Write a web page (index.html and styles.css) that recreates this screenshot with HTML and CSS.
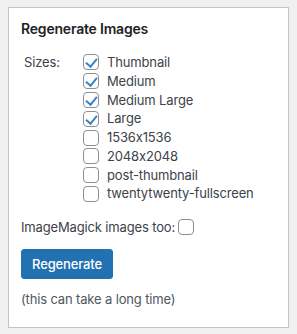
FILE: index.html
```html
<!DOCTYPE html>
<html lang="en">
<head>
  <meta charset="utf-8">
  <title>Regenerate Images</title>
  <link rel="stylesheet" href="styles.css">
</head>
<body>
  <div class="postbox">
    <h2>Regenerate Images</h2>
    <div class="inside">
      <div class="sizes">
        <span class="sizes-label">Sizes:</span>
        <div class="size-list">
          <label><input type="checkbox" checked> Thumbnail</label>
          <label><input type="checkbox" checked> Medium</label>
          <label><input type="checkbox" checked> Medium Large</label>
          <label><input type="checkbox" checked> Large</label>
          <label><input type="checkbox"> 1536x1536</label>
          <label><input type="checkbox"> 2048x2048</label>
          <label><input type="checkbox"> post-thumbnail</label>
          <label><input type="checkbox"> twentytwenty-fullscreen</label>
        </div>
      </div>
      <label class="magick">ImageMagick images too: <input type="checkbox"></label>
      <button class="button-primary">Regenerate</button>
      <p class="note">(this can take a long time)</p>
    </div>
  </div>
</body>
</html>
```

FILE: styles.css
```css
* {
  box-sizing: border-box;
}
html, body {
  height: 100%;
}
body {
  margin: 0;
  padding: 7px 8px 6px;
  background: #f0f0f1;
  font-family: Inter, "Liberation Sans", sans-serif;
  font-feature-settings: "calt" 0;
  font-size: 13px;
  letter-spacing: -0.15px;
  color: #3c434a;
}
.postbox {
  background: #fff;
  border: 1px solid #c3c4c7;
  height: 100%;
}
h2 {
  margin: 0;
  padding: 11px 12px 0;
  font-size: 14px;
  font-weight: 600;
  line-height: 19px;
  letter-spacing: -0.2px;
  color: #1d2327;
}
.inside {
  padding: 15px 12px 0;
}
.sizes {
  display: flex;
}
.sizes-label {
  width: 62px;
  padding-left: 3px;
  line-height: 19px;
}
.size-list {
  display: flex;
  flex-direction: column;
}
.size-list label,
.magick {
  display: flex;
  align-items: center;
  height: 18.8px;
  line-height: 19px;
}
input[type=checkbox] {
  appearance: none;
  width: 16px;
  height: 16px;
  margin: 0 8px 0 0;
  border: 1px solid #8c8f94;
  border-radius: 4px;
  background: #fff;
  position: relative;
}
input[type=checkbox]:checked::before {
  content: "";
  position: absolute;
  left: 4px;
  top: 1px;
  width: 5px;
  height: 9px;
  border: solid #3582c4;
  border-width: 0 2.5px 2.5px 0;
  transform: rotate(40deg);
}
.magick {
  margin-top: 14px;
  height: 20px;
}
.magick input {
  margin: 0 0 0 3px;
}
.button-primary {
  display: block;
  margin-top: 12px;
  width: 92px;
  height: 30px;
  padding: 0;
  border: 1px solid #2271b1;
  border-radius: 3px;
  background: #2271b1;
  color: #fff;
  font-family: inherit;
  font-size: 13px;
  font-weight: 500;
  letter-spacing: inherit;
}
.note {
  margin: 11px 0 0;
  line-height: 19px;
  color: #50575e;
}
```
